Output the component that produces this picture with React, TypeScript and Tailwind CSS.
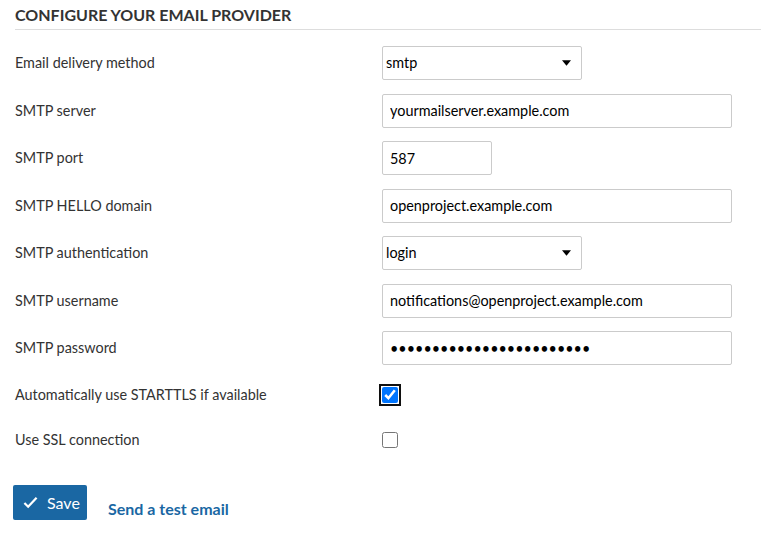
import React from "react";

const font = { fontFamily: "Lato, 'Liberation Sans', sans-serif" };

const Caret: React.FC = () => (
  <svg viewBox="0 0 10 6" className="pointer-events-none absolute right-[11px] top-1/2 h-[6px] w-[9px] -translate-y-1/2">
    <path d="M0 0h10L5 6z" fill="#000" />
  </svg>
);

const SelectBox: React.FC<{ value: string }> = ({ value }) => (
  <div className="relative h-[34px] w-[200px]">
    <select
      defaultValue={value}
      className="h-full w-full appearance-none rounded-[2px] border border-[#cbcbcb] bg-white pl-[3px] text-[14.4px] text-[#000] outline-none"
    >
      <option value={value}>{value}</option>
    </select>
    <Caret />
  </div>
);

const TextBox: React.FC<{ value: string; w?: string; type?: string }> = ({ value, w = "w-[350px]", type = "text" }) => (
  <input
    type={type}
    defaultValue={value}
    className={`h-[34px] ${w} rounded-[2px] border border-[#cbcbcb] bg-white px-[7px] text-[14.4px] text-[#000] outline-none`}
  />
);

type Row = { label: string; field: React.ReactNode; h: string };

const rows: Row[] = [
  { label: "Email delivery method", field: <SelectBox value="smtp" />, h: "h-[34px]" },
  { label: "SMTP server", field: <TextBox value="yourmailserver.example.com" />, h: "h-[34px]" },
  { label: "SMTP port", field: <TextBox value="587" w="w-[110px]" />, h: "h-[34px]" },
  { label: "SMTP HELLO domain", field: <TextBox value="openproject.example.com" />, h: "h-[34px]" },
  { label: "SMTP authentication", field: <SelectBox value="login" />, h: "h-[34px]" },
  { label: "SMTP username", field: <TextBox value="notifications@openproject.example.com" />, h: "h-[34px]" },
  { label: "SMTP password", field: <TextBox type="password" value="abcdefghijklmnopqrstuvwx" />, h: "h-[34px]" },
  {
    label: "Automatically use STARTTLS if available",
    field: (
      <input
        type="checkbox"
        defaultChecked
        className="m-0 h-4 w-4 rounded-[2px] outline-2 outline-offset-1 outline-[#101010] outline"
      />
    ),
    h: "h-[33px]",
  },
  {
    label: "Use SSL connection",
    field: <input type="checkbox" className="m-0 h-4 w-4" />,
    h: "h-[29px]",
  },
];

export default function App() {
  return (
    <div className="min-h-[537px] w-[761px] bg-white pl-[15px] text-[#333]" style={font}>
      <h2 className="border-b border-[#dddddd] pt-[5px] pb-[5px] text-[16px] font-bold uppercase leading-[19px] text-[#333]">
        Configure your email provider
      </h2>

      <div className="mt-[16px] flex flex-col gap-[13.5px]">
        {rows.map((r) => (
          <div key={r.label} className={`flex items-center ${r.h}`}>
            <label className="w-[367px] text-[14.4px] leading-[20px] text-[#333]">{r.label}</label>
            {r.field}
          </div>
        ))}
      </div>

      <div className="mt-[30px] -ml-[2px] flex items-center gap-[21px]">
        <button className="flex h-[35px] w-[74px] items-center gap-[9px] rounded-[2px] bg-[#1a67a3] pl-[10px] text-[16px] text-white">
          <svg viewBox="0 0 16 16" className="h-[15px] w-[15px]">
            <path d="M1.5 8.5l4 4 9-9.5" fill="none" stroke="#fff" strokeWidth="2.4" />
          </svg>
          Save
        </button>
        <a href="#" className="mt-[13px] text-[16px] font-bold text-[#1a67a3]">
          Send a test email
        </a>
      </div>
    </div>
  );
}
